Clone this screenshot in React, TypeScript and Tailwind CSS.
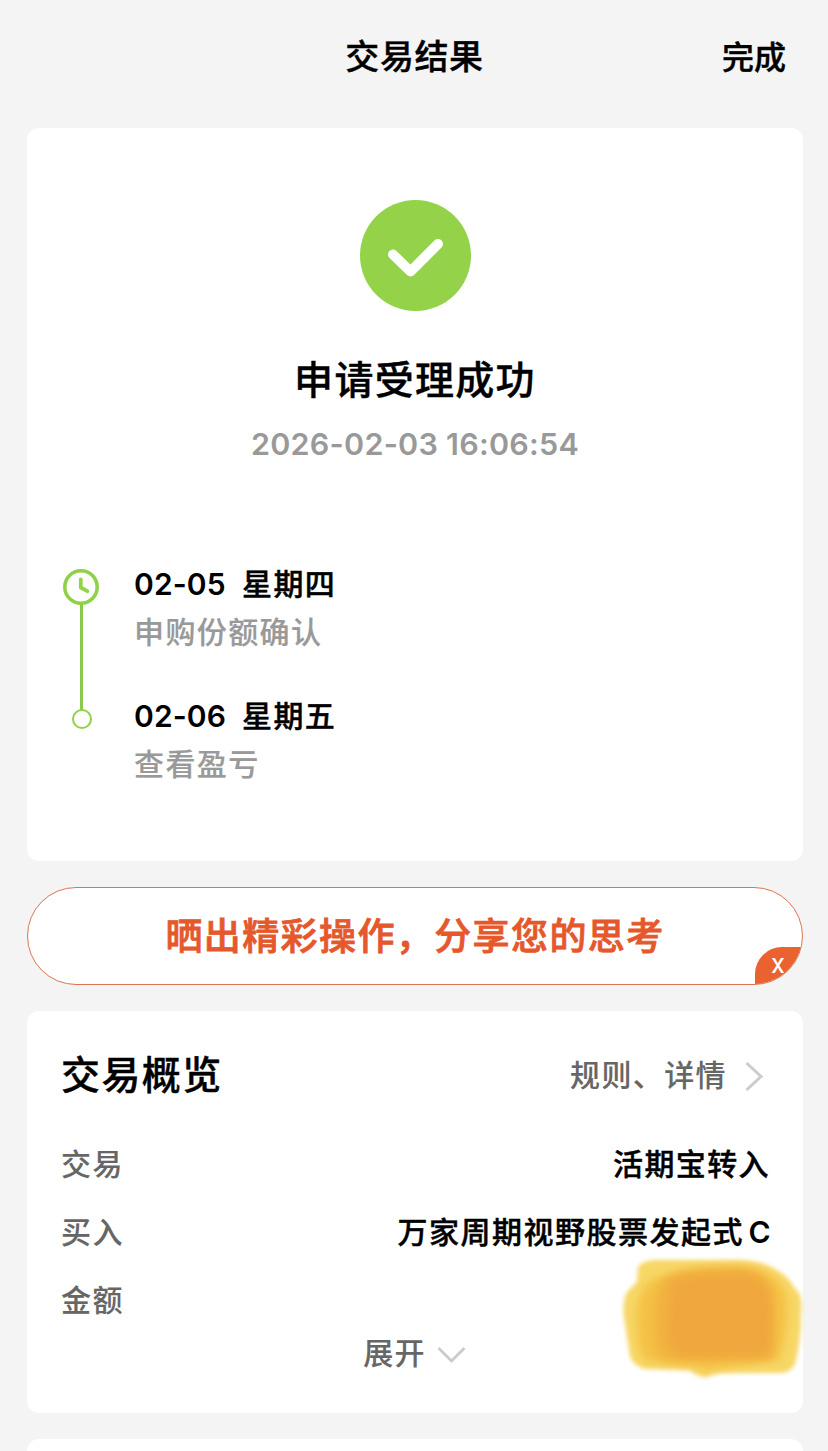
import type { ReactNode } from 'react';

const steps = [
  { date: '02-05', weekday: '星期四', label: '申购份额确认' },
  { date: '02-06', weekday: '星期五', label: '查看盈亏' },
];

function Row({ label, children }: { label: string; children?: ReactNode }) {
  return (
    <div className="flex h-[68px] items-center justify-between text-[30px] tracking-[1.4px] whitespace-nowrap">
      <span className="text-[#666] [-webkit-text-stroke:0.1px]">{label}</span>
      <span className="text-black">{children}</span>
    </div>
  );
}

export default function App() {
  return (
    <main className="h-[1451px] w-[828px] overflow-hidden bg-[#f4f4f4] pr-[25px] pl-[27px] font-['Inter','Noto_Sans_CJK_SC',sans-serif] font-medium text-black [-webkit-text-stroke:0.4px]">
      {/* Header */}
      <header className="grid h-[128px] grid-cols-[1fr_auto_1fr] pt-[32px] leading-[50px]">
        <h1 className="col-start-2 -ml-px text-[34px] tracking-[0.6px]">交易结果</h1>
        <button className="mt-px mr-[17px] self-start justify-self-end text-[32px] leading-[50px]">完成</button>
      </header>

      {/* Result card */}
      <section className="flex h-[733px] flex-col items-center rounded-xl bg-white pt-[72px]">
        <svg className="h-[111px] w-[111px]" viewBox="0 0 111 111" fill="none">
          <circle cx="55.5" cy="55.5" r="55.5" fill="#93d249" />
          <path d="M33 54.5L50.5 71.5L78 44" stroke="#fff" strokeWidth="10" strokeLinecap="round" strokeLinejoin="round" />
        </svg>
        <h2 className="mt-[39px] text-[39px] leading-[60px] tracking-[1.3px]">申请受理成功</h2>
        <p className="mt-[14px] text-[30.5px] leading-[40px] font-semibold tracking-[0.25px] text-[#999] [-webkit-text-stroke:0]">
          2026-02-03 16:06:54
        </p>

        <div className="mt-[96px] flex w-full pl-[35px]">
          <svg className="mt-[8px] h-[164px] w-[38px]" viewBox="0 0 38 164" fill="none">
            <path d="M19.5 36V143" stroke="#8cc950" strokeWidth="3" />
            <circle cx="19" cy="19" r="16.2" stroke="#8fd149" strokeWidth="3.6" />
            <path d="M18.8 11.5V19.5L25.3 23.2" stroke="#93d249" strokeWidth="3.8" strokeLinecap="round" strokeLinejoin="round" />
            <circle cx="20" cy="151" r="9" fill="#fff" stroke="#8fd149" strokeWidth="2" />
          </svg>
          <ul className="ml-[34px] text-[30px]">
            {steps.map((step) => (
              <li key={step.date} className="h-[132px] leading-[48px]">
                <p className="flex">
                  <span className="w-[108px] font-semibold tracking-[0.1px] [-webkit-text-stroke:0]">{step.date}</span>
                  <span className="tracking-[1.4px]">{step.weekday}</span>
                </p>
                <p className="tracking-[1.4px] text-[#999] [-webkit-text-stroke:0.2px]">{step.label}</p>
              </li>
            ))}
          </ul>
        </div>
      </section>

      {/* Share banner */}
      <div className="relative mt-[26px] flex h-[98px] items-center justify-center overflow-hidden rounded-full border border-[#d9754f] bg-white">
        <span className="mt-[2px] text-[37px] tracking-[1.4px] text-[#e5582c] [-webkit-text-stroke:0.8px]">晒出精彩操作，分享您的思考</span>
        <button className="absolute -right-px -bottom-px flex h-[38px] w-[48px] items-center justify-center rounded-tl-[27px] bg-[#e9622f] pr-[2px] pb-[3px] font-['Roboto',sans-serif] text-[27px] leading-none font-normal text-white [-webkit-text-stroke:0]">
          x
        </button>
      </div>

      {/* Overview card */}
      <section className="relative mt-[26px] h-[402px] rounded-xl bg-white pt-[34px] pr-[33px] pl-[34px]">
        <div className="flex h-[60px] items-center justify-between">
          <h2 className="mt-px text-[39px] tracking-[1.4px]">交易概览</h2>
          <div className="flex items-center text-[30px] tracking-[1.4px] text-[#666] [-webkit-text-stroke:0.1px]">
            规则、详情
            <svg className="mt-[2px] mr-[6px] ml-[18px] h-[30px] w-[19px]" viewBox="0 0 19 30" fill="none">
              <path d="M1.5 2L16 15.5L1.5 29" stroke="#ccc" strokeWidth="3" />
            </svg>
          </div>
        </div>
        <div className="mt-[25px]">
          <Row label="交易">活期宝转入</Row>
          <Row label="买入">
            <span className="-mr-[2px] tracking-[1.5px] [word-spacing:-5px]">
              万家周期视野股票发起式 <span className="font-semibold [-webkit-text-stroke:0]">C</span>
            </span>
          </Row>
          <Row label="金额" />
        </div>
        <button className="mx-auto -mt-px flex h-[40px] items-center pr-[2px] text-[30px] tracking-[1.3px] text-[#666] [-webkit-text-stroke:0.1px]">
          展开
          <svg className="mt-[3px] ml-[11px] h-[18px] w-[29px]" viewBox="0 0 29 18" fill="none">
            <path d="M1.5 2L14.5 15L27.5 2" stroke="#ccc" strokeWidth="3" />
          </svg>
        </button>

        {/* Marker scribble hiding the amount */}
        <svg className="absolute top-[239px] left-[588px] h-[140px] w-[200px]" viewBox="0 0 200 140">
          <defs>
            <filter id="soft" x="-10%" y="-10%" width="120%" height="120%">
              <feGaussianBlur stdDeviation="2.2" />
            </filter>
            <filter id="softer" x="-15%" y="-15%" width="130%" height="130%">
              <feGaussianBlur stdDeviation="4" />
            </filter>
          </defs>
          <path d="M23 17Q26 11 40 10H122Q145 10 160 19Q174 27 178 36L184 43Q188 52 186 64Q186 92 180 114Q176 122 167 123L105 123Q98 124 92 127Q85 128 75 120L30 119Q18 116 15 106Q12 88 10 74Q6 54 12 42L22 32Z" fill="#f7d766" filter="url(#soft)" />
          <path d="M34 32Q50 23 80 21L135 19Q156 22 167 36Q173 44 172 66Q170 93 164 110L100 119Q90 123 84 118L32 111Q23 105 22 78Q20 45 34 32Z" fill="#f4c144" filter="url(#softer)" />
          <path d="M50 28Q66 20 90 18L124 17Q148 20 156 35Q161 65 157 103Q154 111 144 110L54 110Q42 108 40 92Q36 40 50 28Z" fill="#f2b23f" filter="url(#softer)" />
          <path d="M56 31Q85 23 130 24Q149 28 155 44Q159 74 155 106L68 107Q53 102 53 80Z" fill="#f0a73c" filter="url(#softer)" />
        </svg>
      </section>

      <section className="mt-[26px] h-[60px] rounded-xl bg-white" />
    </main>
  );
}
